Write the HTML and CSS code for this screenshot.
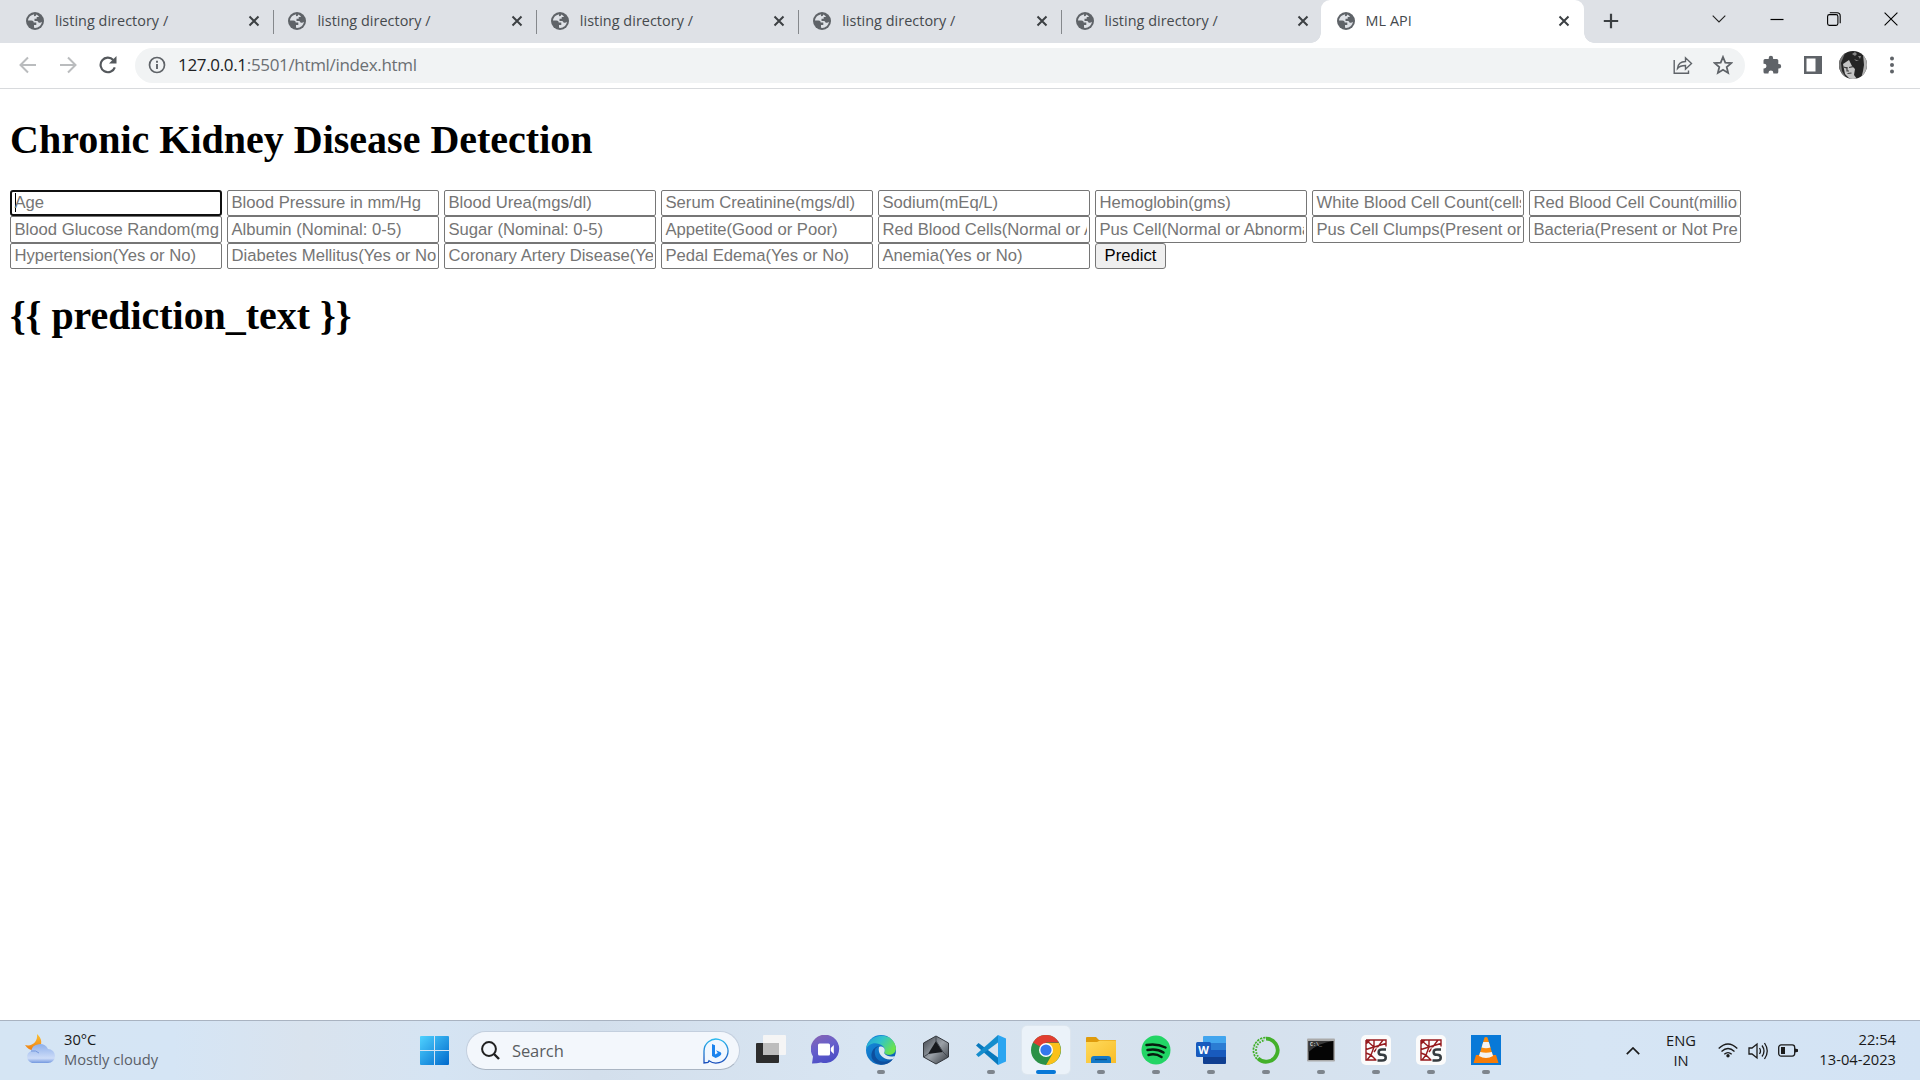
FILE: index.html
```html
<!DOCTYPE html>
<html lang="en">
<head>
<meta charset="utf-8">
<title>ML API</title>
<link rel="stylesheet" href="styles.css">
</head>
<body>
<svg width="0" height="0" class="defs" aria-hidden="true">
  <defs>
    <symbol id="globe" viewBox="0 0 18 18"><circle cx="9" cy="9" r="9" fill="#5f6368"/><path d="M8.2 2.2C4.500 3 2.200 5.600 2 8.500h3.500c1.500 0 2.200.8 2.200 2h2.600v2.500H8v2.800c4 .6 7.500-2 7.900-6-.8.800-1.600 1.200-2.600 1-1.500-.2-1-1.800-2.300-1.800H8.500V6.800h2.200V5h2.200c.3-.8-1.400-2-2.900-2.600.3 1-.4 1.700-1.300 1.800-.8 0-.9-1-.5-2z" class="land"/></symbol>
    <symbol id="x" viewBox="0 0 12 12"><path d="M1.500 1.500l9 9m0-9l-9 9" stroke="#3c4043" stroke-width="2"/></symbol>
    <symbol id="spyder" viewBox="0 0 30 30"><rect width="30" height="30" rx="5" fill="#fbfbfb"/><path d="M5 5h20v6.500M5 5v20h11M5 5l8 7M13 12l12-3.500M13 12V5M13 12l-8 2.500M13 12l-3 8 5 5M10 20l-5-2M10 20l-4 5M13 17l9-12M9 5l-4 4" fill="none" stroke="#96191d" stroke-width="1.400"/><path d="M15.500 12.500h10v14h-10z" fill="#fbfbfb"/><path d="M25 14.500h-4c-4.500 0-4.500 5.300 0 5.300 5 0 5 5.700 0 5.700h-4.500" fill="none" stroke="#353b3f" stroke-width="2.500"/></symbol>
    <linearGradient id="win" x1="0" y1="0" x2="1" y2="1"><stop stop-color="#4fd2ff"/><stop offset="1" stop-color="#0069cc"/></linearGradient>
    <linearGradient id="cloud" x1="0" y1="0" x2="0" y2="1"><stop stop-color="#8fb0ea"/><stop offset=".75" stop-color="#cddcf8"/><stop offset="1" stop-color="#7398df"/></linearGradient>
    <linearGradient id="moon" x1="0" y1="0" x2="0" y2="1"><stop stop-color="#fbc233"/><stop offset="1" stop-color="#ee7d14"/></linearGradient>
    <linearGradient id="bing" x1="0" y1="0" x2="0" y2="1"><stop stop-color="#2bb9ee"/><stop offset="1" stop-color="#174cbb"/></linearGradient>
    <linearGradient id="chat" x1="0" y1="0" x2=".4" y2="1"><stop stop-color="#8c65b0"/><stop offset=".5" stop-color="#6860cb"/><stop offset="1" stop-color="#4d4fc6"/></linearGradient>
    <linearGradient id="edgeTop" x1="0" y1="0" x2="1" y2=".5"><stop stop-color="#239dd9"/><stop offset=".5" stop-color="#31c3cb"/><stop offset="1" stop-color="#6be34c"/></linearGradient>
    <linearGradient id="edgeLow" x1="0" y1="0" x2="1" y2="1"><stop stop-color="#168fdf"/><stop offset="1" stop-color="#0a57ac"/></linearGradient>
    <linearGradient id="folder" x1="0" y1="0" x2="1" y2="1"><stop stop-color="#ffda5c"/><stop offset="1" stop-color="#f8bd29"/></linearGradient>
    <linearGradient id="cube" x1="0" y1="0" x2="1" y2="1"><stop stop-color="#3c4148"/><stop offset=".5" stop-color="#9ba1a8"/><stop offset="1" stop-color="#30343a"/></linearGradient>
  </defs>
</svg>

<header class="browser">
  <div class="tabstrip">
    <div class="tab"><svg class="fav"><use href="#globe"/></svg><span>listing directory /</span><svg class="close"><use href="#x"/></svg></div>
    <div class="tab"><svg class="fav"><use href="#globe"/></svg><span>listing directory /</span><svg class="close"><use href="#x"/></svg></div>
    <div class="tab"><svg class="fav"><use href="#globe"/></svg><span>listing directory /</span><svg class="close"><use href="#x"/></svg></div>
    <div class="tab"><svg class="fav"><use href="#globe"/></svg><span>listing directory /</span><svg class="close"><use href="#x"/></svg></div>
    <div class="tab last"><svg class="fav"><use href="#globe"/></svg><span>listing directory /</span><svg class="close"><use href="#x"/></svg></div>
    <div class="tab active"><svg class="fav"><use href="#globe"/></svg><span>ML API</span><svg class="close"><use href="#x"/></svg></div>
    <svg class="newtab" viewBox="0 0 16 16"><path d="M8 .8v14.400M.8 8h14.400" stroke="#3c4043" stroke-width="2.200"/></svg>
    <div class="winctl">
      <svg width="14" height="8" viewBox="0 0 14 8"><path d="M.7.7L7 7 13.300.7" fill="none" stroke="#222" stroke-width="1.100"/></svg>
      <svg width="14" height="8" viewBox="0 0 14 8"><path d="M.5 4.500h13" stroke="#000" stroke-width="1.200"/></svg>
      <svg width="14" height="14" viewBox="0 0 14 14"><rect x=".6" y="2.600" width="10.300" height="10.800" rx="1.800" fill="none" stroke="#000" stroke-width="1.100"/><path d="M2.800.7h7.200q3.200 0 3.200 3.200v7.300" fill="none" stroke="#000" stroke-width="1.100"/></svg>
      <svg width="14" height="14" viewBox="0 0 14 14"><path d="M.6.6l12.800 12.800m0-12.800L.6 13.400" stroke="#000" stroke-width="1.100"/></svg>
    </div>
  </div>
  <div class="toolbar">
    <div class="nav">
      <svg viewBox="0 0 18 18"><path d="M17 9H2M9 1.500L1.500 9 9 16.500" fill="none" stroke="#babcbe" stroke-width="2"/></svg>
      <svg viewBox="0 0 18 18"><path d="M1 9h15M9 1.500L16.500 9 9 16.500" fill="none" stroke="#babcbe" stroke-width="2"/></svg>
      <svg viewBox="0 0 18 18"><path d="M15.800 11.300A7.300 7.300 0 1 1 14.300 4" fill="none" stroke="#54585c" stroke-width="2.200"/><path d="M17.500 0v7.500H10z" fill="#54585c"/></svg>
    </div>
    <div class="omnibox">
      <svg class="info" viewBox="0 0 18 18"><circle cx="9" cy="9" r="7.500" fill="none" stroke="#5f6368" stroke-width="1.700"/><path d="M9 8v5M9 4.800v1.900" stroke="#5f6368" stroke-width="1.900"/></svg>
      <div class="url">127.0.0.1<span>:5501/html/index.html</span></div>
      <svg class="share" viewBox="0 0 20 20"><path d="M1.200 5V18.300H15.500V15.500M4.500 13.500c.5-4.500 3-7 8-7V2.800l6 5.700-6 5.700v-3.700c-4 0-6 .5-8 3z" fill="none" stroke="#5f6368" stroke-width="1.400"/></svg>
      <svg class="star" viewBox="0 0 20 20"><path d="M10 2l2.300 5.600 6 .5-4.600 3.900 1.400 5.900L10 14.700l-5.100 3.200 1.400-5.900L1.700 8.100l6-.5z" fill="none" stroke="#5f6368" stroke-width="1.800"/></svg>
    </div>
    <div class="actions">
      <svg width="20" height="20" viewBox="0 0 20 20"><path d="M1.500 5.500q0-1.500 1.500-1.500h3.700V3a2.200 2.200 0 0 1 4.400 0v1h3.700q1.500 0 1.500 1.500v3.600h.7a2.200 2.200 0 0 1 0 4.400h-.7V17q0 1.500-1.500 1.500h-3.500v-.7a2.400 2.400 0 0 0-4.800 0v.7H3q-1.500 0-1.500-1.500v-3.500h.6a2.400 2.400 0 0 0 0-4.800h-.6z" fill="#5f6368"/></svg>
      <svg width="18" height="18" viewBox="0 0 18 18"><path d="M0 0h18v18H0zM2.500 2.500v13h9v-13z" fill="#5f6368" fill-rule="evenodd"/></svg>
      <svg width="28" height="28" viewBox="0 0 28 28"><clipPath id="face"><circle cx="14" cy="14" r="14"/></clipPath><g clip-path="url(#face)"><path fill="#252525" d="M0 0h28v28H0z"/><path d="M0 5l6-3-4 10 1 8 5 8H0z" fill="#777"/><path d="M4 13l6-4 3 6 3 3-1 6 3 4h-7l-5-5z" fill="#c4c4c4"/><path d="M4.500 16l3 .8m2.500-.3l4-.8M8.500 22.500l4-.5M8 16v4h2" fill="none" stroke="#3b3b3b" stroke-width="1.200"/><path d="M13 3l3-2 2 2-2 2zM19 5l3 0-1 3zM15 8l2 2 3 0" fill="#858585"/><path d="M24 3l4 5v18l-6 2 2-8 1-6z" fill="#b5b5b5"/></g></svg>
      <svg width="4" height="18" viewBox="0 0 4 18"><circle cx="2" cy="2.500" r="2" fill="#5f6368"/><circle cx="2" cy="9" r="2" fill="#5f6368"/><circle cx="2" cy="15.500" r="2" fill="#5f6368"/></svg>
    </div>
  </div>
</header>

<main class="page">
  <h1>Chronic Kidney Disease Detection</h1>
  <form class="fields">
    <input class="focused" placeholder="Age">
    <input placeholder="Blood Pressure in mm/Hg">
    <input placeholder="Blood Urea(mgs/dl)">
    <input placeholder="Serum Creatinine(mgs/dl)">
    <input placeholder="Sodium(mEq/L)">
    <input placeholder="Hemoglobin(gms)">
    <input placeholder="White Blood Cell Count(cells/cumm)">
    <input placeholder="Red Blood Cell Count(millions/cmm)">
    <input placeholder="Blood Glucose Random(mgs/dl)">
    <input placeholder="Albumin (Nominal: 0-5)">
    <input placeholder="Sugar (Nominal: 0-5)">
    <input placeholder="Appetite(Good or Poor)">
    <input placeholder="Red Blood Cells(Normal or Abnormal)">
    <input placeholder="Pus Cell(Normal or Abnormal)">
    <input placeholder="Pus Cell Clumps(Present or Not Present)">
    <input placeholder="Bacteria(Present or Not Present)">
    <input placeholder="Hypertension(Yes or No)">
    <input placeholder="Diabetes Mellitus(Yes or No)">
    <input placeholder="Coronary Artery Disease(Yes or No)">
    <input placeholder="Pedal Edema(Yes or No)">
    <input placeholder="Anemia(Yes or No)">
    <button type="button">Predict</button>
  </form>
  <h1 class="result">{{ prediction_text }}</h1>
</main>

<footer class="taskbar">
  <div class="weather">
    <svg width="30" height="30" viewBox="0 0 30 30"><path d="M12 0c5 4 6 11 1 15-4 3-10 1-13-4 7 2 13-3 12-11z" fill="url(#moon)"/><path d="M7 29a7 6.500 0 0 1-1-12 9 8.500 0 0 1 17-2 7 7 0 0 1 0 14z" fill="url(#cloud)"/><path d="M6 17q5-1 8 2" fill="none" stroke="#7598dd" stroke-width="1"/></svg>
    <div class="lines"><div>30°C</div><div class="muted">Mostly cloudy</div></div>
  </div>
  <div class="apps">
    <svg class="start" viewBox="0 0 29 29"><path d="M1 0h13v14H0V1q0-1 1-1zM15 0h13q1 0 1 1v13H15zM0 15h14v14H1q-1 0-1-1zM15 15h14v13q0 1-1 1H15z" fill="url(#win)"/></svg>
    <div class="search">
      <svg width="19" height="19" viewBox="0 0 19 19"><circle cx="8" cy="8" r="6.900" fill="none" stroke="#202020" stroke-width="2"/><path d="M13 13l5 5" stroke="#202020" stroke-width="2.400"/></svg>
      <span>Search</span>
      <svg width="26" height="26" viewBox="0 0 26 26"><path d="M1 25V13A12 12 0 1 1 6 22.800L5 24.500z" fill="#f0f7ff" stroke="url(#bing)" stroke-width="1.300"/><path d="M9 6l3 1.200v9.300l2.800-1.500-1.800-2.700 4.600 2c1.700 1.800.5 3.700-5 5.700L9 18z" fill="#1a83ee"/></svg>
    </div>
    <div class="tray-apps">
      <div class="app off"><svg viewBox="0 0 30 30"><rect x="0" y="8" width="23" height="20" rx="1" fill="#2d2d2d"/><rect x="7" y="0" width="23" height="20" rx="1" fill="#f5f5f5"/><path d="M7 8h16v12H7z" fill="#bdbdbd"/></svg></div>
      <div class="app off"><svg viewBox="0 0 30 30"><path d="M1 28.500l1-7A14.200 14.200 0 1 1 10 27.500q-4 1-9 1z" fill="url(#chat)"/><rect x="7" y="8.500" width="12" height="12" rx="1.500" fill="#fff"/><path d="M19.800 13l3-3v9l-3-3z" fill="#fff"/></svg></div>
      <div class="app"><svg viewBox="0 0 30 30"><circle cx="15" cy="15" r="15" fill="url(#edgeLow)"/><path d="M0 14C1-1 27-6 30 13c0 6-6 9-12 5 2-3 0-8-5-9C7 7 2 10 0 14z" fill="url(#edgeTop)"/><path d="M9 15c-2 11 9 15 18 9-8 11-25 4-21-7 1-3 4-6 8-6-3 1-5 2-5 4z" fill="#0d4f9e"/><path d="M13 12c5-2 7 3 5 6 3 4 7 4 11 3l-2 3c-8 2-16-4-14-12z" fill="#dbe7f2"/></svg></div>
      <div class="app off"><svg viewBox="0 0 30 30"><path d="M15 1l12.500 7v14L15 29 2.500 22V8z" fill="url(#cube)" stroke="#33373d"/><path d="M15 6L7 19l15-2z" fill="#17191d"/><path d="M15 1v5l7 11 5 5M7 19l-4.500 3" stroke="#444a52" fill="none"/></svg></div>
      <div class="app"><svg viewBox="0 0 30 30"><path d="M0 10.500L2.500 8 24 24l-2 6z" fill="#0879bd"/><path d="M0 19.500L2.500 22 24 6l-2-6z" fill="#158dcd"/><path d="M22 0l8 3.500v23L22 30z" fill="#2aa5f1"/></svg></div>
      <div class="app current"><svg viewBox="0 0 30 30"><circle cx="15" cy="15" r="15" fill="#2b9147"/><path d="M15 15L2 7.500A15 15 0 0 1 28 7.500H15z" fill="#e13d30"/><path d="M15 8h13a15 15 0 0 1-13 22l6.500-11.300z" fill="#fbc11a"/><circle cx="15" cy="15" r="7" fill="#fff"/><circle cx="15" cy="15" r="5.600" fill="#3478ed"/></svg></div>
      <div class="app"><svg viewBox="0 0 30 30"><path d="M0 3q0-1 1-1h9l3 3h16q1 0 1 1v8H0z" fill="#df9b0c"/><path d="M0 7h11l3-1.500h15q1 0 1 1V28H0z" fill="url(#folder)"/><path d="M5 28v-4q0-3 3-3h14q3 0 3 3v4z" fill="#1479c7"/><path d="M9 24.500h12" stroke="#0b4f87" stroke-width="1.300"/></svg></div>
      <div class="app"><svg viewBox="0 0 30 30"><circle cx="15" cy="15" r="14.500" fill="#22d565"/><path d="M5.500 10q10-2 19 2.500M6.500 15q9-2 16 2.500M7.500 20q7-2 13 2" fill="none" stroke="#061b0e" stroke-width="2.500" stroke-linecap="round"/></svg></div>
      <div class="app"><svg viewBox="0 0 30 30"><path d="M7 2q0-1 1-1h21q1 0 1 1v6H7z" fill="#42a5ee"/><path d="M7 8h23v7H7z" fill="#2b7cd3"/><path d="M7 15h23v7H7z" fill="#185abd"/><path d="M7 22h23v6q0 1-1 1H8q-1 0-1-1z" fill="#103f91"/><rect y="7" width="15" height="15" rx="1.500" fill="#185abd"/><text x="7.500" y="18.500" text-anchor="middle" class="w">W</text></svg></div>
      <div class="app"><svg viewBox="0 0 30 30"><path d="M15 3.700A11.500 11.500 0 1 1 7 23.300" fill="none" stroke="#43b02a" stroke-width="3.800"/><path d="M14.500 2.600A12.600 12.600 0 0 0 6 24" fill="none" stroke="#43b02a" stroke-width="1.700" stroke-dasharray="2.300 1"/><path d="M14 5.200A10.200 10.200 0 0 0 7.500 22" fill="none" stroke="#43b02a" stroke-width="1.900" stroke-dasharray="1.700 1.300" stroke-dashoffset="1.500"/></svg></div>
      <div class="app"><svg viewBox="0 0 30 30"><rect x="1" y="3.500" width="28" height="23" rx="1" fill="#aaa"/><path d="M2.500 6h25v19h-25z" fill="#050505"/><path d="M2.500 6h25Q12 8 2.500 17z" fill="#393939"/><text x="4" y="11" class="prompt">C:\_</text></svg></div>
      <div class="app"><svg><use href="#spyder"/></svg></div>
      <div class="app"><svg><use href="#spyder"/></svg></div>
      <div class="app"><svg viewBox="0 0 30 30"><path fill="#0879d8" d="M0 0h30v30H0z"/><path d="M5 20h20l2.500 8h-25z" fill="#f57c08"/><path d="M13.500 2.500q1.500-1 3 0L22 21q-7 4-14 0z" fill="#fc8b0c"/><path d="M12.200 7h5.600l1.600 5.500q-4.400 1.500-8.800 0zM9.200 17q5.800 1.500 11.600 0L22 21q-7 4-14 0z" fill="#f2f2f2"/></svg></div>
    </div>
  </div>
  <div class="tray">
    <svg class="up" viewBox="0 0 14 8"><path d="M.8 7.200L7 1l6.200 6.200" fill="none" stroke="#1b1b1b" stroke-width="1.700"/></svg>
    <div class="lines lang"><div>ENG</div><div>IN</div></div>
    <svg class="wifi" viewBox="0 0 20 15"><path d="M.7 5.500q9.300-9 18.600 0M3.500 8.500q6.500-6 13 0M6.300 11.300q3.700-3.400 7.400 0" fill="none" stroke="#1b1b1b" stroke-width="1.300"/><circle cx="10" cy="12.800" r="1.700" fill="#1b1b1b"/></svg>
    <svg class="sound" viewBox="0 0 20 18"><path d="M1 6h3l5-4v14l-5-4H1z" fill="none" stroke="#1b1b1b" stroke-width="1.300"/><path d="M11.500 6q2 3 0 6M14 3.500q4 5.500 0 11M16.500 1q5.500 8 0 16" fill="none" stroke="#1b1b1b" stroke-width="1.300"/></svg>
    <svg class="battery" viewBox="0 0 20 13"><rect x=".7" y=".9" width="16" height="11.200" rx="2.500" fill="none" stroke="#1b1b1b" stroke-width="1.300"/><path d="M3 3h4v7H3zM17 4.500l3 .8v2.400l-3 .8z" fill="#1b1b1b"/></svg>
    <div class="lines clock"><div>22:54</div><div>13-04-2023</div></div>
  </div>
</footer>
</body>
</html>
```
FILE: styles.css
```css
* { box-sizing: border-box; }
html, body { height: 100%; }
body { margin: 0; display: flex; flex-direction: column; background: #fff; overflow: hidden; font-family: "Open Sans", "Noto Sans", sans-serif; }
svg { display: block; flex: none; }
.defs { position: absolute; }

.tabstrip { display: flex; height: 43px; padding-left: 12px; background: #dee1e6; }
.tab { display: flex; align-items: center; width: 262.4px; height: 42px; padding: 0 14px; font-size: 14.4px; color: #45494d; letter-spacing: .04px; background: linear-gradient(#85888c, #85888c) right 0 top 10px / 1px 24px no-repeat; }
.tab.last { background: none; width: 259px; padding-right: 12px; }
.tab span { flex: 1; margin: -2px 0 0 11px; white-space: nowrap; }
.fav { width: 18px; height: 18px; }
.land { fill: #dee1e6; }
.close { width: 12px; height: 12px; }
.tab.active { position: relative; width: 263px; height: 43px; padding: 0 14px 1px 16px; background: #fff; border-radius: 9px 9px 0 0; }
.tab.active::before, .tab.active::after { content: ""; position: absolute; bottom: 0; width: 10px; height: 10px; }
.tab.active::before { left: -10px; background: radial-gradient(circle at 0 0, transparent 9.5px, #fff 10px); }
.tab.active::after { right: -10px; background: radial-gradient(circle at 100% 0, transparent 9.5px, #fff 10px); }
.newtab { width: 16px; height: 16px; margin: 13px 0 0 19px; }
.winctl { display: grid; grid-template-columns: repeat(4, 57.3px); place-items: center; height: 37px; margin-left: auto; }

.toolbar { display: flex; align-items: center; height: 46px; padding-bottom: 1px; border-bottom: 1px solid #d8dadd; }
.nav { display: flex; gap: 22px; padding-left: 19px; width: 135px; }
.nav svg { width: 18px; height: 18px; }
.omnibox { display: flex; align-items: center; width: 1610px; height: 35px; padding: 0 12px 0 13px; border-radius: 18px; background: #f1f3f4; }
.info { width: 18px; height: 18px; }
.url { flex: 1; margin-left: 12px; font-size: 17px; letter-spacing: -.33px; color: #202124; line-height: 30px; }
.url span { color: #6b6f73; }
.share { width: 20px; height: 20px; margin-right: 20px; }
.star { width: 20px; height: 20px; }
.actions { display: grid; flex: 1; grid-template-columns: 54px 28px 52px 26px; align-items: center; justify-items: center; }

.page { flex: 1; padding: 0 10px; font-family: "Liberation Serif", serif; }
.page h1 { margin: 28px 0 27px; font-size: 40px; line-height: 46px; font-weight: 700; color: #000; }
.fields { display: grid; grid-template-columns: repeat(8, 212px); grid-template-rows: 26px 27px 26px; column-gap: 5px; }
.fields input, .fields button { min-width: 0; font: 16.667px "Liberation Sans", sans-serif; border: 1px solid #767676; border-radius: 2px; }
.fields input { padding: 0 2.5px 0 3px; text-indent: .5px; letter-spacing: -.008px; background-color: #fff; }
.fields input::placeholder { color: #757575; opacity: 1; }
.fields .focused { padding: 0 2px; border: 2px solid #101010; border-radius: 3px; background: linear-gradient(#000, #000) 3px 1px / 1px 19px no-repeat; }
.fields button { width: 71px; padding: 0; border-radius: 3px; background: #efefef; color: #000; }
.page .result { margin-top: 24px; letter-spacing: -.04px; }

.taskbar { display: flex; align-items: stretch; height: 60px; border-top: 1px solid #a9b3c1; background: linear-gradient(90deg, #d5e5f4 0%, #d5e5f5 9%, #d9e3ee 16%, #d5e4f3 23%, #d3dfec 31%, #d8e5f2 45%, #d6e1ed 64%, #d6e5f4 83%, #d3e3f4 100%); color: #191919; }
.weather { display: flex; width: 420px; padding: 13px 0 0 25px; gap: 9px; }
.lines { margin-top: -5px; font-size: 14.7px; line-height: 20px; white-space: nowrap; }
.muted { color: #5a6068; }
.apps { display: flex; align-items: flex-start; }
.start { width: 29px; height: 29px; margin-top: 15px; }
.search { display: flex; align-items: center; width: 274px; height: 39px; margin: 10px 0 0 17px; padding: 0 10px 0 14px; border: 1px solid #c3cfde; border-bottom-color: #aab5c3; border-radius: 20px; background: #f3f7fc; }
.search span { flex: 1; margin-left: 12px; font-size: 16.5px; letter-spacing: -.1px; color: #5a5d61; }
.tray-apps { display: flex; gap: 7px; margin: 5px 0 0 7px; }
.app { display: flex; flex-direction: column; align-items: center; width: 48px; height: 48px; padding-top: 9px; border-radius: 5px; }
.app svg { width: 30px; height: 30px; }
.app::after { content: ""; width: 8px; height: 4px; margin-top: 5px; border-radius: 2px; background: #7e858d; }
.app.off::after { display: none; }
.app.current { background: #ebf2f9; box-shadow: 0 0 0 1px #dde6ef; }
.app.current::after { width: 20px; background: #0878d7; }
.w { font: bold 11px "Open Sans", sans-serif; fill: #fff; }
.prompt { font: bold 5px "Liberation Mono", monospace; fill: #ddd; }
.tray { display: flex; align-items: center; flex: 1; justify-content: flex-end; padding-right: 24px; }
.tray .lines { margin-top: -1px; }
.up { width: 14px; height: 8px; margin-right: 26px; }
.lang { width: 30px; text-align: center; margin-right: 22px; }
.wifi { width: 20px; height: 15px; margin-right: 10px; }
.sound { width: 20px; height: 18px; margin-right: 10px; }
.battery { width: 20px; height: 13px; }
.tray .clock { width: 98px; margin-top: -3px; text-align: right; }
```
